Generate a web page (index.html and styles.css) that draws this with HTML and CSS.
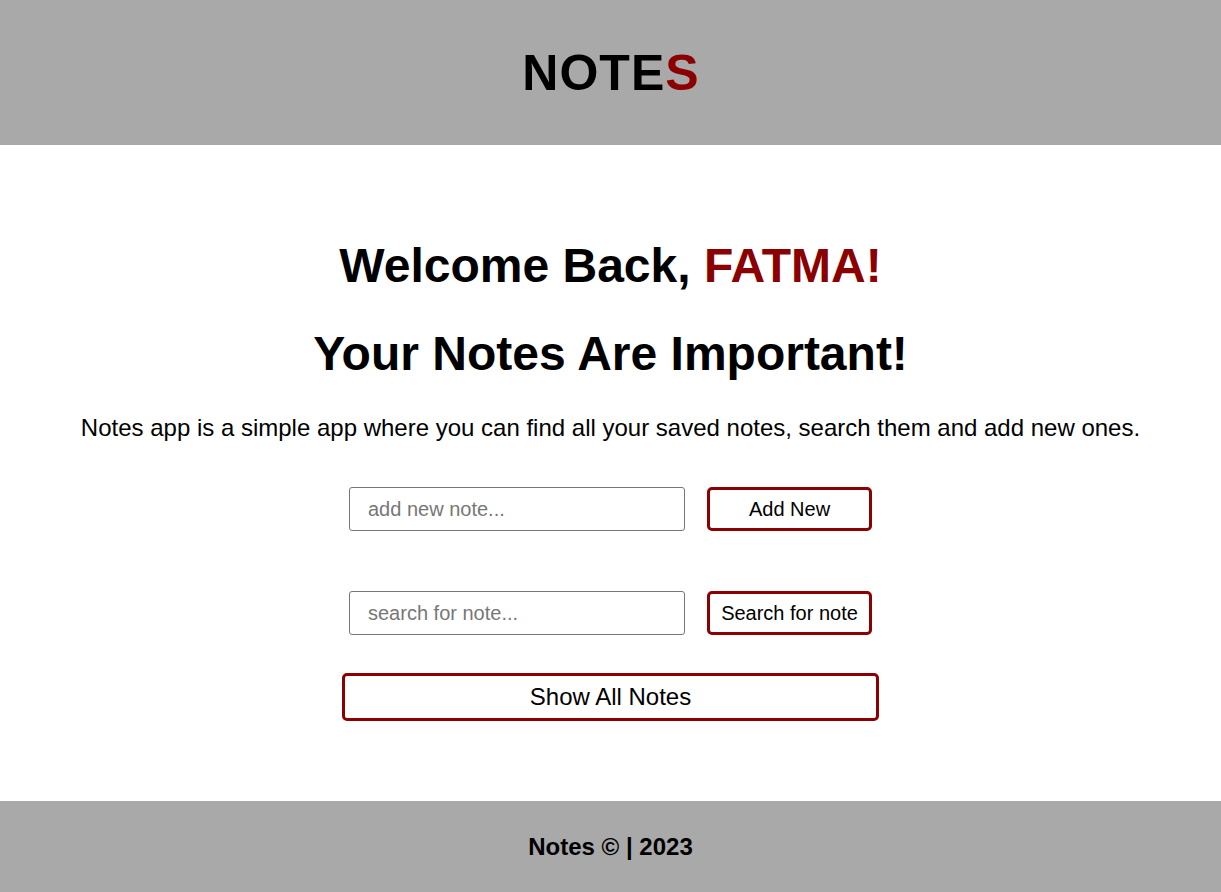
FILE: index.html
```html
<!DOCTYPE html>
<html lang="en">
<head>
<meta charset="utf-8">
<title>Notes</title>
<link rel="stylesheet" href="styles.css">
</head>
<body>
<header class="site-header">
  <div class="logo">NOTE<span class="accent">S</span></div>
</header>
<main class="main">
  <h1 class="welcome">Welcome Back, <span class="accent">FATMA!</span></h1>
  <h1 class="tagline">Your Notes Are Important!</h1>
  <p class="intro">Notes app is a simple app where you can find all your saved notes, search them and add new ones.</p>
  <div class="row row-add">
    <input class="field" type="text" placeholder="add new note...">
    <button class="btn">Add New</button>
  </div>
  <div class="row row-search">
    <input class="field" type="text" placeholder="search for note...">
    <button class="btn">Search for note</button>
  </div>
  <button class="btn btn-wide">Show All Notes</button>
</main>
<footer class="site-footer">Notes © | 2023</footer>
</body>
</html>
```

FILE: styles.css
```css
* { box-sizing: border-box; }
html, body { margin: 0; padding: 0; }
body {
  font-family: "Liberation Sans", Arial, sans-serif;
  color: #000;
  background: #fff;
  height: 892px;
  display: flex;
  flex-direction: column;
}
.accent { color: #8b0000; }
.site-header {
  background: #a9a9a9;
  height: 145px;
  display: flex;
  align-items: center;
  justify-content: center;
  flex-shrink: 0;
}
.logo {
  font-size: 50px;
  font-weight: 700;
  letter-spacing: 1px;
  margin-left: 1px;
}
.main {
  flex: 1;
  display: flex;
  flex-direction: column;
  align-items: center;
  padding-top: 93px;
}
.welcome, .tagline {
  margin: 0;
  font-size: 48px;
  font-weight: 700;
  line-height: 56px;
}
.tagline { margin-top: 32px; }
.intro {
  margin: 32px 0 0;
  font-size: 24px;
  line-height: 28px;
}
.row {
  display: flex;
  gap: 22px;
}
.row-add { margin-top: 45px; }
.row-search { margin-top: 60px; }
.field {
  width: 336px;
  height: 44px;
  border: 1px solid #767676;
  border-radius: 3px;
  padding: 0 18px;
  font-family: inherit;
  font-size: 20px;
  color: #000;
}
.field::placeholder { color: #777; }
.btn {
  width: 165px;
  height: 44px;
  border: 3px solid #8b0000;
  border-radius: 5px;
  background: #fff;
  font-family: inherit;
  font-size: 20px;
  color: #000;
  padding: 0;
}
.btn-wide {
  width: 537px;
  height: 48px;
  margin-top: 38px;
  font-size: 24px;
}
.site-footer {
  background: #a9a9a9;
  height: 91px;
  display: flex;
  align-items: center;
  justify-content: center;
  font-size: 24px;
  font-weight: 700;
  flex-shrink: 0;
}
```
